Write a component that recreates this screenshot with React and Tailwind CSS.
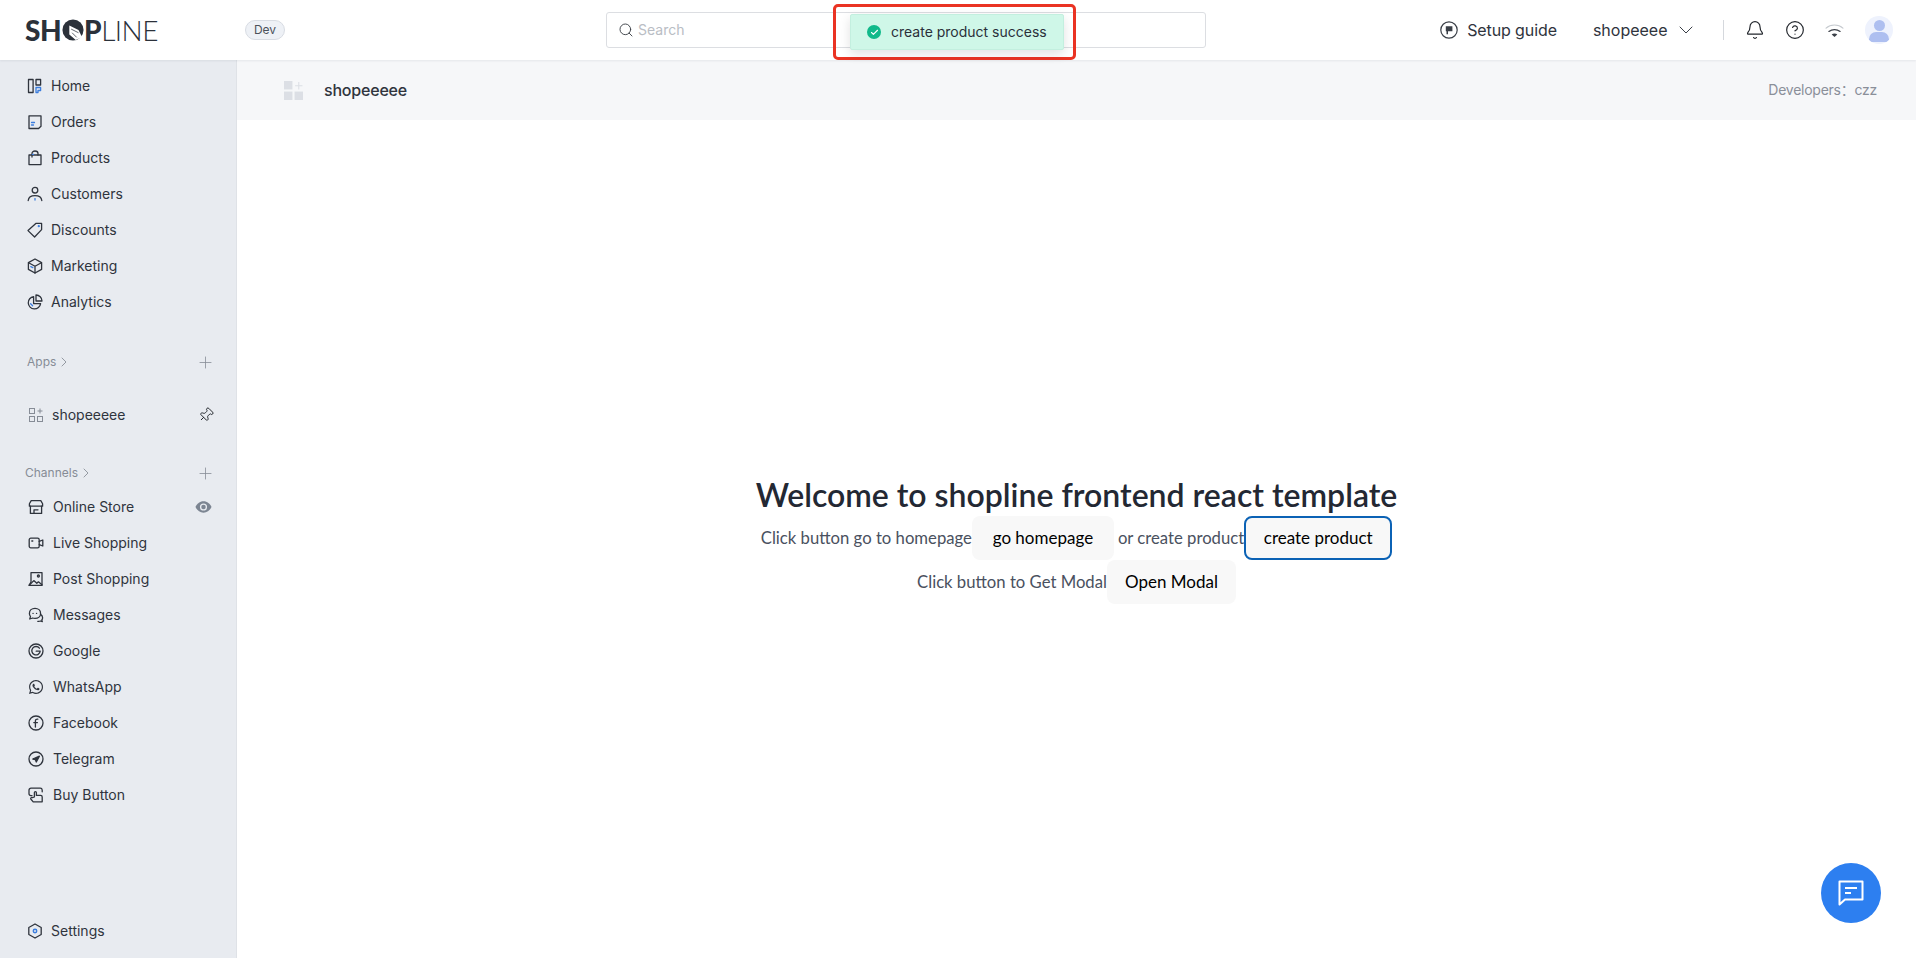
import { Search, ChevronDown, ChevronRight, Plus, Bell, CircleHelp, Pin, Check } from 'lucide-react';
import { FaWhatsapp } from 'react-icons/fa';

const Ic = ({ children, className = '' }) => (
  <svg viewBox="0 0 16 16" fill="none" stroke="#2f343d" strokeWidth="1.300" strokeLinecap="round" strokeLinejoin="round" className={`w-4 h-4 shrink-0 ${className}`}>
    {children}
  </svg>
);

const BLUE = '#3b7ddd';

const icons = {
  home: (
    <>
      <rect x="1.500" y="1.500" width="4.600" height="13" />
      <rect x="9" y="1.500" width="4.600" height="5.500" />
      <path d="M9 9.500h4.600v3H11v2H9z" stroke={BLUE} />
    </>
  ),
  orders: (
    <>
      <path d="M2 1.800h12v10.400l-2.400 2.300H2z" />
      <path d="M4.500 8.500h3M4.500 11h2" stroke={BLUE} />
    </>
  ),
  products: (
    <>
      <path d="M2 5h12v9.600H2z" />
      <path d="M5 7V3.400C5 2 6.200 1 8 1s3 1 3 2.400V5" />
      <path d="M5.500 4.400h1" stroke={BLUE} />
    </>
  ),
  customers: (
    <>
      <circle cx="8" cy="4.200" r="2.800" />
      <path d="M1.200 14.500C1.600 11 4.400 9.600 8 9.600s6.400 1.400 6.800 4.900" />
      <path d="M8 12.600v1.400" stroke={BLUE} />
    </>
  ),
  discounts: (
    <>
      <path d="M8.800 1.400h5.800v6.200L7.600 15 1 8.600z" />
      <circle cx="11.800" cy="4.200" r="0.500" stroke={BLUE} />
    </>
  ),
  marketing: (
    <>
      <path d="M8 1 14.600 4.600v6.800L8 15l-6.600-3.600V4.600z" />
      <path d="M1.600 4.800 8 8.200l6.400-3.400M8 8.200V15" />
      <path d="M3.800 8.600l2 1" stroke={BLUE} />
    </>
  ),
  analytics: (
    <>
      <path d="M6.600 2.600a6.200 6.200 0 1 0 7 7H6.600z" />
      <path d="M9 1a6 6 0 0 1 6 6H9z" />
      <path d="M3.600 9.800l2 2" stroke={BLUE} />
    </>
  ),
  store: (
    <>
      <path d="M3.200 1.600h9.600l1.800 3.200v2.400H1.400V4.800z" />
      <path d="M2.400 7.200v7.200h11.200V7.200" />
      <path d="M6 14.400v-3.600h4" />
    </>
  ),
  live: (
    <>
      <rect x="1.200" y="3.200" width="10" height="9.600" rx="1.600" />
      <path d="M11.200 6.400l3.600-1.400v6l-3.600-1.400" />
      <path d="M3.800 6h1" />
    </>
  ),
  post: (
    <>
      <path d="M3 1.600h11v12.800H1l2-3.400z" />
      <path d="M1.400 14l4.400-4.400 3 2.600 1.600-1.400 3.600 3" />
      <circle cx="10.400" cy="5" r="1" />
    </>
  ),
  messages: (
    <>
      <path d="M7 1.400c3.200 0 5.600 2.200 5.600 5s-2.400 5-5.600 5c-.8 0-1.600-.1-2.300-.4L1.800 12l.7-2.600C1.800 8.600 1.400 7.600 1.400 6.400c0-2.800 2.400-5 5.600-5z" />
      <path d="M12.600 7.400c1.300.9 2 2.100 2 3.400 0 .8-.3 1.600-.8 2.200l.5 1.600-1.900-.6c-.8.400-1.700.5-2.600.3" />
      <path d="M5 6.400h.1M8.500 6.400h.1" />
    </>
  ),
  google: (
    <>
      <circle cx="8" cy="8" r="7" />
      <path d="M11.400 5.200A4.200 4.200 0 1 0 12.200 8.200H8.200" />
    </>
  ),
  facebook: (
    <>
      <circle cx="8" cy="8" r="7" />
      <path d="M9.800 4.200c-1.500-.2-2.400.4-2.400 1.900V12M5.800 7.600h3.600" />
    </>
  ),
  telegram: (
    <>
      <circle cx="8" cy="8" r="7" />
      <path d="M11.400 5.200 4.800 8l2.600.7.9 2.300z" fill="#2f343d" />
    </>
  ),
  buy: (
    <>
      <path d="M4 8.600H2.800a1.800 1.800 0 0 1-1.800-1.800V3.200A2 2 0 0 1 3 1.200h9.200A2 2 0 0 1 14.200 3v1.800" />
      <path d="M6.400 10V5.600a1 1 0 0 1 2 0v2.800h4.200A1.600 1.600 0 0 1 14.200 10v4.800H5.200L2.800 12a1.100 1.100 0 0 1 1.600-1.400z" />
    </>
  ),
  settings: (
    <>
      <path d="M8 1 14.200 4.500v7L8 15l-6.200-3.500v-7z" />
      <circle cx="8" cy="8" r="1.700" stroke={BLUE} strokeWidth="1.500" />
    </>
  ),
};

const topNav = [
  ['Home', 'home'],
  ['Orders', 'orders'],
  ['Products', 'products'],
  ['Customers', 'customers'],
  ['Discounts', 'discounts'],
  ['Marketing', 'marketing'],
  ['Analytics', 'analytics'],
];

const channels = [
  ['Live Shopping', 'live'],
  ['Post Shopping', 'post'],
  ['Messages', 'messages'],
  ['Google', 'google'],
  ['WhatsApp', 'whatsapp'],
  ['Facebook', 'facebook'],
  ['Telegram', 'telegram'],
  ['Buy Button', 'buy'],
];

function Logo() {
  return (
    <div className="flex items-center text-[#2b313a] text-[28px] leading-none tracking-[-0.5px] font-['Lato',sans-serif]">
      <span className="font-black">SH</span>
      <svg viewBox="0 0 24 24" className="w-[22px] h-[22px] mx-[0.5px]">
        <circle cx="12" cy="12" r="11.500" fill="#2b313a" />
        <path d="M8 7 18 12l4 8-7 3-7-6z" fill="#fff" />
        <path d="M10 11l8 4M11 15l5 5" stroke="#2b313a" strokeWidth="0.800" />
      </svg>
      <span className="font-black">P</span>
      <span className="font-light">LINE</span>
    </div>
  );
}

function NavRow({ label, icon }) {
  return (
    <div className="flex h-9 items-center gap-2 pl-[27px]">
      <Ic>{icons[icon]}</Ic>
      <span>{label}</span>
    </div>
  );
}

function ChannelRow({ label, icon, children }) {
  return (
    <div className="flex h-9 items-center gap-[9px] pl-7 pr-[24px]">
      {icon === 'whatsapp' ? <FaWhatsapp className="w-4 h-4 shrink-0 text-[#2f343d]" /> : <Ic>{icons[icon]}</Ic>}
      <span>{label}</span>
      {children}
    </div>
  );
}

function SectionTitle({ label, className = '' }) {
  return (
    <div className={`flex h-6 items-center pr-[21px] text-xs text-[#868c96] ${className}`}>
      <span>{label}</span>
      <ChevronRight className="w-4 h-4" strokeWidth={1.300} />
      <Plus className="ml-auto w-[19px] h-[19px]" strokeWidth={1} />
    </div>
  );
}

function Sidebar() {
  return (
    <aside className="flex w-[237px] shrink-0 flex-col border-r border-[#dfe2e7] bg-[#e8ebf0] pt-[8px] pb-[9px] text-sm text-[#2f343d]">
      {topNav.map(([label, icon]) => (
        <NavRow key={label} label={label} icon={icon} />
      ))}
      <SectionTitle label="Apps" className="mt-[30px] pl-[27px]" />
      <div className="mt-[29px] flex h-6 items-center pl-[29px] pr-[22px]">
        <svg viewBox="0 0 14 14" fill="none" stroke="#868c96" strokeWidth="1" className="w-[14px] h-[14px] shrink-0">
          <rect x="0.500" y="0.500" width="5" height="5" />
          <rect x="0.500" y="8.500" width="5" height="5" />
          <rect x="8.500" y="8.500" width="5" height="5" />
          <path d="M11 0.500v5M8.500 3h5" />
        </svg>
        <span className="ml-[9px]">shopeeeee</span>
        <Pin className="ml-auto w-[16px] h-[16px] rotate-45 text-[#22262c]" strokeWidth={1.400} />
      </div>
      <SectionTitle label="Channels" className="mt-[34px] pl-[25px]" />
      <div className="mt-[4px]">
        <ChannelRow label="Online Store" icon="store">
          <svg viewBox="0 0 18 14" className="ml-auto w-[17px] h-[14px]">
            <path d="M9 1C5 1 2 3.600.5 7 2 10.400 5 13 9 13s7-2.600 8.500-6C16 3.600 13 1 9 1z" fill="#7c8592" />
            <circle cx="9" cy="7" r="3.800" fill="#e8ebf0" />
            <circle cx="9" cy="7" r="2.400" fill="#7c8592" />
          </svg>
        </ChannelRow>
      </div>
      {channels.map(([label, icon]) => (
        <ChannelRow key={label} label={label} icon={icon} />
      ))}
      <div className="mt-auto">
        <NavRow label="Settings" icon="settings" />
      </div>
    </aside>
  );
}

function Header() {
  return (
    <header className="relative z-10 flex h-[60px] shrink-0 items-center bg-white pl-[25px] pr-[23px] shadow-[0_1px_2px_rgba(30,40,60,0.08)]">
      <div className="w-[220px]">
        <Logo />
      </div>
      <span className="flex h-5 w-10 items-center justify-center rounded-full border border-[#d8dce3] bg-[#eef1f6] text-xs text-[#4b515b]">Dev</span>
      <div className="ml-[321px] flex h-[36px] w-[600px] items-center rounded-[3px] border border-[#dcdee2] bg-white pl-[11px] text-sm text-[#b9bdc4]">
        <Search className="w-[16px] h-[16px] text-[#3b3f46]" strokeWidth={1.400} />
        <span className="ml-[4px]">Search</span>
      </div>
      <div className="ml-auto flex items-center text-[#2f343d]">
        <svg viewBox="0 0 18 18" fill="none" className="w-[18px] h-[18px]">
          <circle cx="9" cy="9" r="8.200" stroke="#3a3f47" strokeWidth="1.200" />
          <path d="M5.800 5.200h6.600v5H8v3H6.500v-3h-.700z" fill="#3a3f47" />
        </svg>
        <span className="ml-[9px] text-base tracking-[-0.1px]">Setup guide</span>
        <span className="ml-[36px] text-base">shopeeee</span>
        <ChevronDown className="ml-[6.500px] w-6 h-6 text-[#3a3f47]" strokeWidth={1} />
        <span className="ml-[25px] h-5 w-px bg-[#d5d8dd]" />
        <Bell className="ml-[21px] w-[20px] h-[20px] text-[#22262c]" strokeWidth={1.400} />
        <CircleHelp className="ml-[20px] w-[20px] h-[20px] text-[#22262c]" strokeWidth={1.400} />
        <svg viewBox="0 0 20 16" fill="none" className="ml-[20px] w-[19px] h-[15px]">
          <path d="M1 5.500C6 1 14 1 19 5.500" stroke="#c6cacf" strokeWidth="1.300" strokeLinecap="round" />
          <path d="M4 9c3.500-2.700 8.500-2.700 12 0" stroke="#3a3f47" strokeWidth="1.300" strokeLinecap="round" />
          <path d="M7 12.300 10 15l3-2.700c-1.700-1.300-4.300-1.300-6 0z" fill="#3a3f47" />
        </svg>
        <div className="relative ml-[21px] flex h-[28px] w-[28px] items-start justify-center overflow-hidden rounded-full bg-[#eef2fd]">
          <span className="mt-[4px] h-[11px] w-[11px] rounded-full bg-[#aebff0]" />
          <span className="absolute bottom-[2px] h-[10px] w-[20px] rounded-t-[10px] rounded-b-[4px] bg-[#aebff0]" />
        </div>
      </div>
    </header>
  );
}

function Button({ children, focused, className = '' }) {
  return (
    <button
      type="button"
      className={`h-[44px] rounded-[8px] bg-[#f8f8f8] text-[17px] text-black ${focused ? 'border-2 border-[#0b62b5]' : ''} ${className}`}
    >
      {children}
    </button>
  );
}

function Main() {
  return (
    <main className="flex min-w-0 flex-1 flex-col bg-white">
      <div className="flex h-[60px] shrink-0 items-center bg-[#f6f7f9] pl-[47px] pr-[39px]">
        <svg viewBox="0 0 18 18" className="w-[19px] h-[19px] fill-[#dcdfe5]">
          <rect x="0" y="0" width="8" height="8" />
          <rect x="0" y="10" width="8" height="8" />
          <rect x="10" y="10" width="8" height="8" />
          <path d="M13.500 1h1v3h3v1h-3v3h-1V5h-3V4h3z" />
        </svg>
        <span className="ml-[21px] text-base font-medium tracking-[-0.2px] text-[#2f343d]">shopeeeee</span>
        <span className="ml-auto text-sm tracking-[-0.25px] text-[#8a8f99] font-['Inter','Noto_Sans_CJK_SC',sans-serif]">Developers：czz</span>
      </div>
      <div className="flex flex-1 flex-col items-center justify-center font-['Lato',sans-serif] text-[16.700px] text-[#4a5160]">
        <h1 className="text-[32px] leading-[41px] font-semibold text-[#232833] -translate-y-px">Welcome to shopline frontend react template</h1>
        <div className="flex items-center">
          <span className="translate-y-px">Click button go to homepage</span>
          <Button className="w-[142px]">go homepage</Button>
          <span className="ml-1 translate-y-px">or create product</span>
          <Button focused className="w-[148px]">create product</Button>
        </div>
        <div className="flex items-center">
          <span className="translate-y-px">Click button to Get Modal</span>
          <Button className="w-[129px]">Open Modal</Button>
        </div>
      </div>
    </main>
  );
}

export default function App() {
  return (
    <div className="relative flex h-screen flex-col overflow-hidden bg-white font-['Inter',sans-serif]">
      <Header />
      <div className="flex min-h-0 flex-1">
        <Sidebar />
        <Main />
      </div>

      <div className="absolute left-[833px] top-[4px] z-20 h-[56px] w-[243px] rounded-[5px] border-[3px] border-[#ea3323]" />
      <div className="absolute left-[850px] top-[14px] z-20 flex h-[36px] w-[214px] items-center rounded-[2px] border border-[#c3efdf] bg-[#cff7e8] pl-4 text-sm text-[#2a303a] shadow-[0_4px_12px_rgba(0,0,0,0.12)]">
        <span className="flex h-[14px] w-[14px] items-center justify-center rounded-full bg-[#10b98a]">
          <Check className="w-[9px] h-[9px] text-white" strokeWidth={3} />
        </span>
        <span className="ml-[10px]">create product success</span>
      </div>

      <button type="button" className="absolute right-[35px] bottom-[35px] z-20 flex h-[60px] w-[60px] items-center justify-center rounded-full bg-[#2d7ff0]">
        <svg viewBox="0 0 26 26" fill="none" stroke="#fff" strokeWidth="2" className="w-[26px] h-[26px]">
          <path d="M1.500 1.500h23v18H7l-5.500 5z" strokeLinejoin="round" />
          <path d="M7 8h12M7 13h6" />
        </svg>
      </button>
    </div>
  );
}
